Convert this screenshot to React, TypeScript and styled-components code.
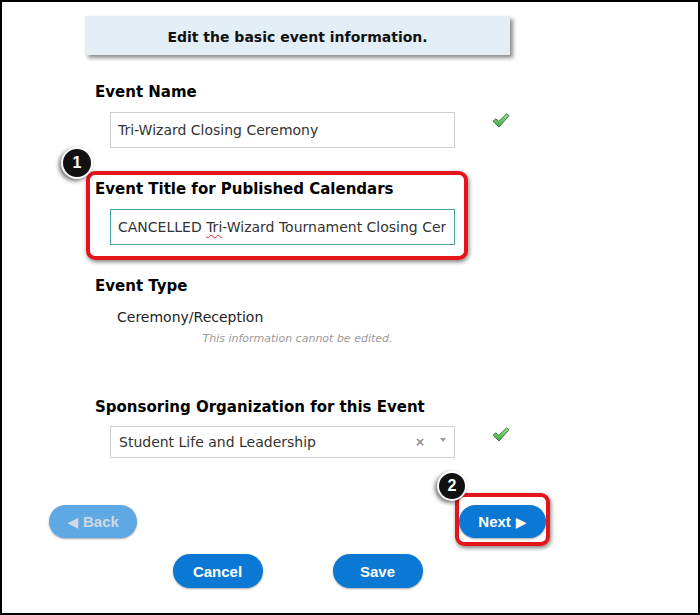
import React from "react";
import styled, { createGlobalStyle } from "styled-components";

const Global = createGlobalStyle`
  html, body { margin: 0; padding: 0; background: #fff; }
  * { box-sizing: border-box; }
`;

const Frame = styled.div`
  width: 700px;
  height: 615px;
  border: 2px solid #000;
  background: #fff;
  overflow: hidden;
  font-family: "DejaVu Sans", Verdana, sans-serif;
  color: #000;
`;

const Container = styled.div`
  width: 591px;
  display: flex;
  flex-direction: column;
  align-items: center;
  padding-top: 14px;
`;

const Header = styled.div`
  width: 425px;
  height: 39px;
  padding-top: 2px;
  background: #e4eef6;
  box-shadow: 3px 3px 4px rgba(0, 0, 0, 0.45);
  display: flex;
  align-items: center;
  justify-content: center;
  font-weight: bold;
  font-size: 14px;
  color: #111;
`;

const Form = styled.div`
  width: 425px;
  margin-top: 28px;
  display: flex;
  flex-direction: column;
`;

const Section = styled.section<{ $gap?: number }>`
  position: relative;
  display: flex;
  flex-direction: column;
  margin-bottom: ${(p) => p.$gap ?? 32}px;
`;

const Label = styled.div<{ $space?: number }>`
  padding-left: 10px;
  font-weight: bold;
  font-size: 15px;
  line-height: 18px;
  margin-bottom: ${(p) => p.$space ?? 11}px;
  color: #000;
`;

const FieldRow = styled.div`
  display: flex;
  justify-content: space-between;
  align-items: flex-start;
  padding-left: 25px;
`;

const FieldBox = styled.div<{ $focus?: boolean; $h?: number; $pad?: number }>`
  width: 345px;
  height: ${(p) => p.$h ?? 36}px;
  border: 1px solid ${(p) => (p.$focus ? "#47a3a6" : "#cfcfcf")};
  background: #fff;
  display: flex;
  align-items: center;
  padding: 0 8px 0 ${(p) => p.$pad ?? 7}px;
  font-size: 14px;
  color: #333;
`;

const FieldText = styled.span`
  flex: 1;
  overflow: hidden;
  white-space: nowrap;
  padding-bottom: 4px;
  margin-bottom: -4px;
`;

const Misspelled = styled.span`
  text-decoration-line: underline;
  text-decoration-style: wavy;
  text-decoration-color: #e02020;
  text-decoration-thickness: 1px;
  text-underline-offset: 2px;
`;

const Clear = styled.span`
  font-size: 12px;
  font-weight: bold;
  color: #8a8a8a;
  margin-right: 15px;
`;

const Arrow = styled.span`
  width: 0;
  height: 0;
  border-left: 3px solid transparent;
  border-right: 3px solid transparent;
  border-top: 4px solid #999;
  margin-bottom: 4px;
`;

const CheckWrap = styled.div`
  margin-top: 1px;
  width: 18px;
  height: 15px;
`;

const Value = styled.div`
  padding-left: 32px;
  font-size: 14px;
  line-height: 17px;
  color: #222;
`;

const Note = styled.div`
  margin-top: 6px;
  text-align: center;
  font-size: 11px;
  line-height: 14px;
  font-style: italic;
  color: #9a9a9a;
`;

const Ring = styled.div<{ $t: number; $r: number; $b: number; $l: number }>`
  position: absolute;
  top: ${(p) => p.$t}px;
  right: ${(p) => p.$r}px;
  bottom: ${(p) => p.$b}px;
  left: ${(p) => p.$l}px;
  border: 4px solid #e3151b;
  border-radius: 9px;
  box-shadow: 1px 2px 4px rgba(0, 0, 0, 0.5);
  pointer-events: none;
`;

const Badge = styled.div<{ $x: number; $y: number; $size: number }>`
  position: absolute;
  left: ${(p) => p.$x}px;
  top: ${(p) => p.$y}px;
  width: ${(p) => p.$size}px;
  height: ${(p) => p.$size}px;
  border-radius: 50%;
  background: #111;
  border: 2px solid #fff;
  box-shadow: -2px 2px 4px rgba(0, 0, 0, 0.55);
  color: #fff;
  font-family: "Liberation Sans", Arial, sans-serif;
  font-weight: bold;
  font-size: 16px;
  display: flex;
  align-items: center;
  justify-content: center;
  z-index: 2;
`;

const NavRow = styled.div`
  width: 497px;
  margin-top: 47px;
  display: flex;
  justify-content: space-between;
`;

const ActionRow = styled.div`
  margin-top: 16px;
  display: flex;
  justify-content: center;
  gap: 70px;
`;

const Button = styled.button<{ $muted?: boolean; $w: number; $h?: number }>`
  width: ${(p) => p.$w}px;
  height: ${(p) => p.$h ?? 33}px;
  border: none;
  border-radius: 17px;
  padding: 0;
  background: ${(p) => (p.$muted ? "#5ea9e4" : "#0b78d3")};
  color: ${(p) => (p.$muted ? "#cfd9e3" : "#fff")};
  font-family: "Liberation Sans", Arial, sans-serif;
  font-weight: bold;
  font-size: 15px;
  box-shadow: 0 1px 2px rgba(0, 0, 0, 0.35);
  display: flex;
  align-items: center;
  justify-content: center;
  gap: 5px;
`;

const Tri = styled.span`
  font-family: "DejaVu Sans", sans-serif;
  font-size: 14px;
  line-height: 1;
`;

const NextWrap = styled.div`
  position: relative;
`;

function Check() {
  return (
    <CheckWrap>
      <svg width="18" height="15" viewBox="0 0 18 15">
        <defs>
          <linearGradient id="cg" x1="0" y1="0" x2="0" y2="1">
            <stop offset="0" stopColor="#a0e88a" />
            <stop offset="1" stopColor="#3aa83a" />
          </linearGradient>
        </defs>
        <path
          d="M1 8.2 L3.8 5.8 L6.8 8.4 L14.6 0.9 L17 2.6 L7 14 Z"
          fill="url(#cg)"
          stroke="#377a48"
          strokeWidth="1"
          strokeLinejoin="round"
        />
      </svg>
    </CheckWrap>
  );
}

export default function App() {
  return (
    <>
      <Global />
      <Frame>
        <Container>
          <Header>Edit the basic event information.</Header>
          <Form>
            <Section>
              <Label>Event Name</Label>
              <FieldRow>
                <FieldBox>
                  <FieldText>Tri-Wizard Closing Ceremony</FieldText>
                </FieldBox>
                <Check />
              </FieldRow>
            </Section>

            <Section>
              <Ring $t={-9} $r={42} $b={-15} $l={1} />
              <Badge $x={-24} $y={-33} $size={32}>1</Badge>
              <Label>Event Title for Published Calendars</Label>
              <FieldRow>
                <FieldBox $focus>
                  <FieldText>
                    CANCELLED <Misspelled>Tri</Misspelled>-Wizard Tournament Closing Ceremony
                  </FieldText>
                </FieldBox>
              </FieldRow>
            </Section>

            <Section $gap={52}>
              <Label $space={14}>Event Type</Label>
              <Value>Ceremony/Reception</Value>
              <Note>This information cannot be edited.</Note>
            </Section>

            <Section $gap={0}>
              <Label $space={10}>Sponsoring Organization for this Event</Label>
              <FieldRow>
                <FieldBox $h={32} $pad={8}>
                  <FieldText>Student Life and Leadership</FieldText>
                  <Clear>×</Clear>
                  <Arrow />
                </FieldBox>
                <Check />
              </FieldRow>
            </Section>
          </Form>

          <NavRow>
            <Button $muted $w={88}>
              <Tri>◀</Tri>Back
            </Button>
            <NextWrap>
              <Ring $t={-12} $r={-4} $b={-8} $l={-4} />
              <Badge $x={-22} $y={-34} $size={30}>2</Badge>
              <Button $w={87}>
                Next<Tri>▶</Tri>
              </Button>
            </NextWrap>
          </NavRow>

          <ActionRow>
            <Button $w={90} $h={34}>Cancel</Button>
            <Button $w={90} $h={34}>Save</Button>
          </ActionRow>
        </Container>
      </Frame>
    </>
  );
}
